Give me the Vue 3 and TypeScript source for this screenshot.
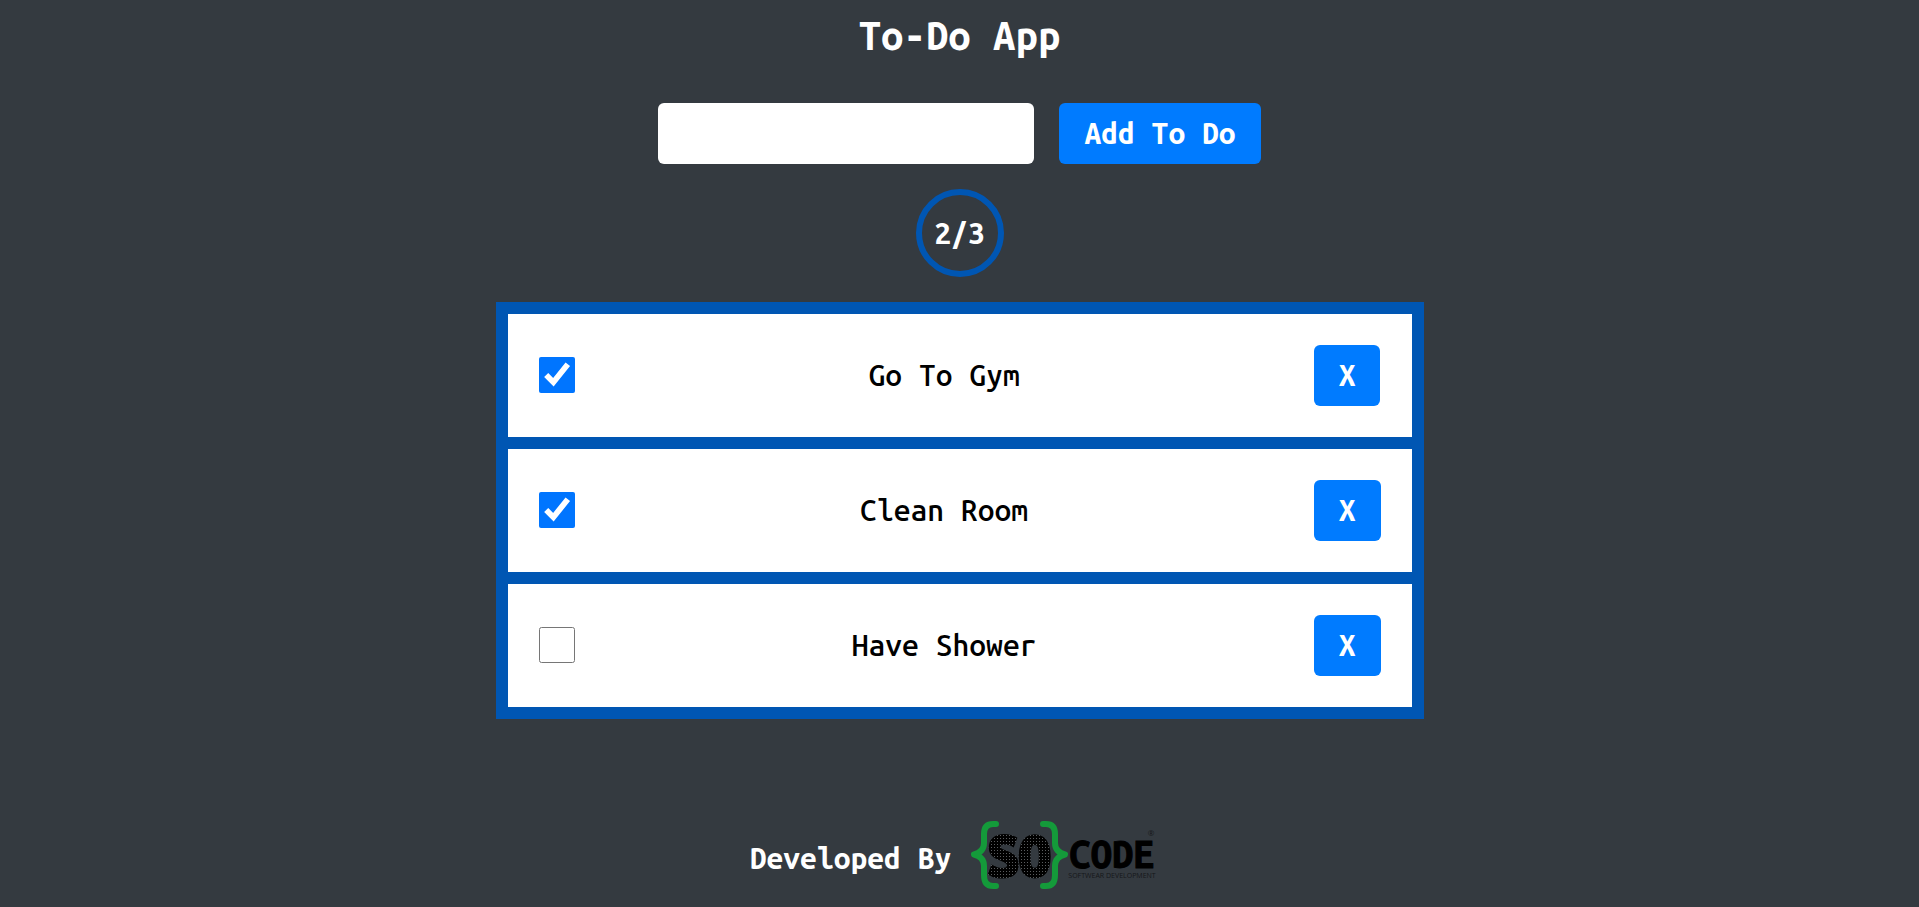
<script setup lang="ts">
import { computed, ref } from 'vue'

interface Todo {
  id: number
  title: string
  done: boolean
}

const draft = ref('')
const todos = ref<Todo[]>([
  { id: 1, title: 'Go To Gym', done: true },
  { id: 2, title: 'Clean Room', done: true },
  { id: 3, title: 'Have Shower', done: false },
])

const doneCount = computed(() => todos.value.filter((t) => t.done).length)

function addTodo() {
  const title = draft.value.trim()
  if (!title) return
  todos.value.push({ id: Date.now(), title, done: false })
  draft.value = ''
}

function removeTodo(id: number) {
  todos.value = todos.value.filter((t) => t.id !== id)
}
</script>

<template>
  <div class="app">
    <h1 class="title">To-Do App</h1>

    <form class="add" @submit.prevent="addTodo">
      <input v-model="draft" class="field" type="text" aria-label="New to do" />
      <button class="btn" type="submit">Add To Do</button>
    </form>

    <div class="count">{{ doneCount }}/{{ todos.length }}</div>

    <ul class="list">
      <li v-for="todo in todos" :key="todo.id" class="item">
        <input :id="`todo-${todo.id}`" v-model="todo.done" class="check" type="checkbox" />
        <label :for="`todo-${todo.id}`">{{ todo.title }}</label>
        <button class="btn" type="button" @click="removeTodo(todo.id)">X</button>
      </li>
    </ul>

    <footer class="footer">
      <span class="credit">Developed By</span>
      <svg class="logo" viewBox="0 0 218 80" role="img" aria-label="SO CODE Softwear Development">
        <defs>
          <pattern id="mesh" width="3" height="3" patternUnits="userSpaceOnUse">
            <rect width="3" height="3" fill="#000" />
            <rect x="1" y="1" width="1" height="1" fill="#5a5c5e" />
          </pattern>
        </defs>
        <g fill="none" stroke="#149a3a" stroke-width="6" stroke-linecap="round" stroke-linejoin="round">
          <path d="M45 8H42Q33 8 33 18V27Q33 36 23 38.500Q33 41 33 50V59Q33 70 42 70H45" />
          <path d="M92 8H95Q104 8 104 18V27Q104 36 114 38.500Q104 41 104 50V59Q104 70 95 70H92" />
        </g>
        <text class="so" x="68" y="60" text-anchor="middle">SO</text>
        <text class="code" x="161" y="52" text-anchor="middle">CODE</text>
        <text class="tag" x="161" y="62" text-anchor="middle">SOFTWEAR DEVELOPMENT</text>
        <text class="mark" x="200" y="20" text-anchor="middle">®</text>
      </svg>
    </footer>
  </div>
</template>

<style>
body {
  margin: 0;
  background: #343a40;
}
</style>

<style scoped>
.app {
  display: flex;
  flex-direction: column;
  align-items: center;
  min-height: 100vh;
  box-sizing: border-box;
  color: #fff;
  background: #343a40;
  font: 500 30px/35px 'Ubuntu Mono', 'DejaVu Sans Mono', monospace;
}

.title {
  margin: 0 0 31px;
  font-size: 40px;
  line-height: 72px;
  font-weight: 700;
}

.add {
  display: flex;
  gap: 25px;
}

.field {
  width: 376px;
  box-sizing: border-box;
  padding: 12px;
  border: 0;
  border-radius: 6px;
  background: #fff;
  font: inherit;
}

.btn {
  height: 61px;
  padding: 0 25px 1px;
  border: 0;
  border-radius: 6px;
  background: #007bff;
  color: #fff;
  font: inherit;
  font-weight: 700;
  cursor: pointer;
}

.count {
  display: flex;
  align-items: center;
  justify-content: center;
  width: 88px;
  height: 88px;
  margin: 25px 0;
  box-sizing: border-box;
  border: 6px solid #0056b3;
  border-radius: 50%;
  font-weight: 700;
}

.list {
  display: flex;
  flex-direction: column;
  gap: 12px;
  width: 100%;
  max-width: 928px;
  margin: 0;
  padding: 12px;
  box-sizing: border-box;
  background: #0056b3;
  list-style: none;
}

.item {
  display: flex;
  align-items: center;
  justify-content: space-between;
  padding: 31px;
  background: #fff;
  color: #000;
}

.check {
  width: 36px;
  height: 36px;
  margin: 0 0 1px;
}

.footer {
  display: flex;
  align-items: center;
  margin-top: 97px;
  font-weight: 700;
}

.credit {
  padding-top: 4px;
}

.logo {
  width: 218px;
  height: 80px;
}

.so {
  font: 700 56px 'Ubuntu Mono', 'DejaVu Sans Mono', monospace;
  fill: url(#mesh);
  stroke: url(#mesh);
  stroke-width: 4px;
}

.code {
  font: 700 38px 'Ubuntu Mono', 'DejaVu Sans Mono', monospace;
  stroke: #000;
  stroke-width: 1px;
}

.tag {
  font: 400 7px 'Open Sans', sans-serif;
  fill: #14171a;
}

.mark {
  font: 400 8px 'Open Sans', sans-serif;
  fill: #14171a;
}
</style>
